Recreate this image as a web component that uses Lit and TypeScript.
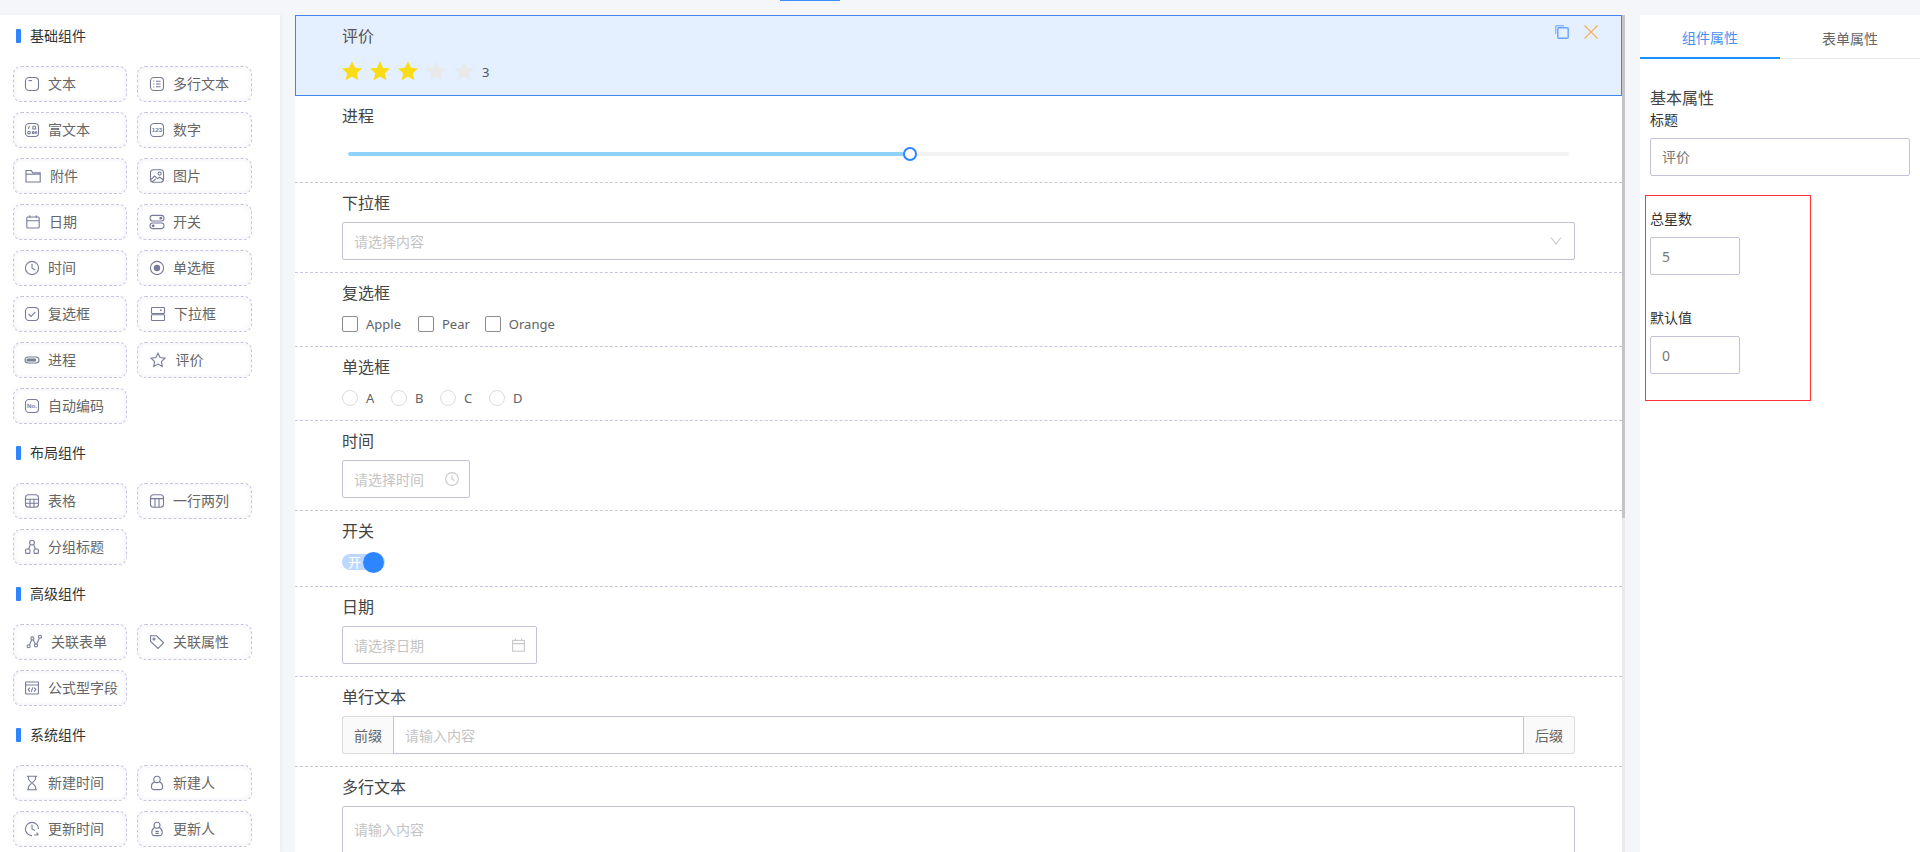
import { LitElement, html, css, svg } from "lit";
import { customElement } from "lit/decorators.js";

const ICONS: Record<string, unknown> = {
  text: svg`<rect x="1.5" y="1.5" width="13" height="13" rx="3.5"/><path d="M4.5 4.6h3.6"/>`,
  multi: svg`<rect x="1.5" y="1.5" width="13" height="13" rx="3.5"/><path d="M7 5.2h4.5M7 8h4.5M7 10.8h4.5M4.7 4.6v1M4.7 7.5v1M4.7 10.4v1"/>`,
  rich: svg`<rect x="1.5" y="1.5" width="13" height="13" rx="3.5"/><path d="M5.4 3.8 4.4 7M8.8 7V5.4a1.4 1.4 0 0 1 2.8 0V7z"/><circle cx="5" cy="10.6" r="1.3"/><circle cx="9.2" cy="10.6" r="1"/><circle cx="12" cy="10.6" r=".7"/>`,
  number: svg`<rect x="1.5" y="1.5" width="13" height="13" rx="3.5"/><text x="8" y="10.4" text-anchor="middle" class="it">123</text>`,
  folder: svg`<path d="M1 2.5h5.2l1.6 2.4h7.4v9.1H1z"/><path d="M1 6.2h14.2"/>`,
  image: svg`<rect x="1.5" y="1.8" width="13" height="12.4" rx="3"/><circle cx="10.6" cy="5.6" r="1.6"/><path d="M1.8 11.6 5.6 8l3 2.6 2-1.4 3.8 2.6M3 14l3.8-3.2"/>`,
  date: svg`<rect x="1.8" y="3" width="12.4" height="11" rx="1"/><path d="M1.8 6.8h12.4M4.8 1.2V4M11.2 1.2V4"/>`,
  switch: svg`<rect x="1" y="1.4" width="14" height="5.6" rx="2.8"/><rect x="1" y="9" width="14" height="5.6" rx="2.8"/><circle cx="11.8" cy="4.2" r="1.4" class="f"/><circle cx="4.2" cy="11.8" r="1.4" class="f"/>`,
  time: svg`<circle cx="8" cy="8" r="6.6"/><path d="M8 3.8V8l3 2"/>`,
  radio: svg`<circle cx="8" cy="8" r="6.6"/><circle cx="8" cy="8" r="3.2" class="f"/>`,
  check: svg`<rect x="1.5" y="1.5" width="13" height="13" rx="3.5"/><path d="m4.6 8 2.4 2.5 4.4-4.6"/>`,
  select: svg`<rect x="1.5" y="1.5" width="13" height="6" rx=".8"/><rect x="1.5" y="8.7" width="13" height="5.8" rx=".8"/><path d="M10 4.2h1.6" stroke-width="1.4"/>`,
  progress: svg`<rect x="1" y="5" width="14" height="6" rx="3"/><rect x="2.6" y="6.4" width="9.4" height="3.2" rx="1.2" class="f"/>`,
  star: svg`<path d="m8 1.2 2.1 4.4 4.8.6-3.5 3.4.9 4.8L8 12.1l-4.3 2.3.9-4.8L1.1 6.2l4.8-.6z"/>`,
  code: svg`<rect x="1.5" y="1.5" width="13" height="13" rx="3.5"/><text x="8" y="10.2" text-anchor="middle" class="it b">No.</text>`,
  table: svg`<rect x="1.5" y="1.8" width="13" height="12.4" rx="3"/><path d="M1.5 6.2h13M1.5 10.2h13M6 6.2v8M10 6.2v8"/>`,
  cols: svg`<rect x="1.5" y="1.8" width="13" height="12.4" rx="3"/><path d="M1.5 5.6h13M6 5.6v8.6M10 5.6v8.6"/>`,
  group: svg`<circle cx="8" cy="3.6" r="2.4"/><rect x="1.6" y="10" width="4.4" height="4.4" rx="1"/><rect x="10" y="10" width="4.4" height="4.4" rx="1"/><path d="M6.4 5.6 4.6 10M9.6 5.6l1.8 4.4"/>`,
  link: svg`<circle cx="2.6" cy="12.2" r="1.5"/><circle cx="6.4" cy="4.4" r="1.5"/><circle cx="10" cy="11.4" r="1.5"/><circle cx="14" cy="2.8" r="1.5"/><path d="M3.4 10.9 5.7 5.8M7.1 5.8l2.2 4.3M10.7 10l2.6-5.8"/>`,
  tag: svg`<path d="M1.6 1.8h6l7 7-5.6 5.6-7.4-7z"/><circle cx="5" cy="5" r="1"/>`,
  formula: svg`<rect x="1.6" y="2" width="12.8" height="12" rx=".6"/><path d="M1.6 5h12.8M5.8 7.6 4.2 9.6l1.6 2M10.2 7.6l1.6 2-1.6 2M8.7 7.4l-1.4 4.4"/>`,
  hourglass: svg`<path d="M2.8 1.2h10.4M2.8 14.8h10.4M4.4 1.2v2.4c0 2.4 3 3 3 4.4s-3 2-3 4.4v2.4M11.6 1.2v2.4c0 2.4-3 3-3 4.4s3 2 3 4.4v2.4"/>`,
  user: svg`<circle cx="8" cy="4.4" r="3.2"/><path d="M5.6 6.8C3.4 7.8 2.4 9.6 2.4 11.4c0 2 1.4 3.2 3.2 3.2h4.8c1.8 0 3.2-1.2 3.2-3.2 0-1.8-1-3.6-3.2-4.6"/>`,
  clock2: svg`<path d="M14.6 8A6.6 6.6 0 1 0 8 14.6"/><path d="M8 3.8V8l3 1.4M10.2 14h4M12.6 11.6l1.8 2.4"/>`,
  user2: svg`<circle cx="8" cy="4.2" r="3"/><path d="M5.6 6.6C3.6 7.6 2.8 9.4 2.8 11.2c0 2 1.2 3.4 3 3.4h4.4c1.8 0 3-1.4 3-3.4 0-1.8-.8-3.6-2.8-4.6M6.4 10.4h3.4M6.4 12.4h3.4"/>`,
};

type Item = [string, string, number?];
const SECTIONS: { title: string; items: Item[] }[] = [
  {
    title: "基础组件",
    items: [
      ["文本", "text"], ["多行文本", "multi"],
      ["富文本", "rich"], ["数字", "number"],
      ["附件", "folder", 16], ["图片", "image"],
      ["日期", "date", 15], ["开关", "switch"],
      ["时间", "time"], ["单选框", "radio"],
      ["复选框", "check"], ["下拉框", "select", 15],
      ["进程", "progress"], ["评价", "star", 16.5],
      ["自动编码", "code"],
    ],
  },
  {
    title: "布局组件",
    items: [["表格", "table"], ["一行两列", "cols"], ["分组标题", "group"]],
  },
  {
    title: "高级组件",
    items: [["关联表单", "link", 17], ["关联属性", "tag"], ["公式型字段", "formula"]],
  },
  {
    title: "系统组件",
    items: [["新建时间", "hourglass"], ["新建人", "user"], ["更新时间", "clock2"], ["更新人", "user2"]],
  },
];

const STAR = "M10 0.2l3 6.5 7 .8-5.2 4.7 1.5 7L10 15.6l-6.3 3.6 1.5-7L0 7.5l7-.8z";

@customElement("app-root")
export class AppRoot extends LitElement {
  static styles = css`
    :host {
      display: block;
      height: 852px;
      overflow: hidden;
      background: #f5f6fa;
      font-family: "Noto Sans", "Noto Sans CJK SC", sans-serif;
      font-size: 14px;
      color: #333;
    }
    * { box-sizing: border-box; }
    .top { height: 15px; padding-left: 780px; }
    .indicator { width: 60px; height: 1px; background: #3a8cff; }
    .main { display: flex; height: 837px; gap: 15px; }

    .left {
      flex: none;
      width: 280px;
      background: #fff;
      box-shadow: 1px 0 4px rgba(120, 120, 160, 0.08);
      overflow: hidden;
    }
    .sec-head {
      display: flex;
      align-items: center;
      height: 42px;
      padding-left: 16px;
      gap: 9px;
      line-height: 20px;
      color: #333;
    }
    .sec-head i { width: 5px; height: 14px; border-radius: 1px; background: #2d85ff; }
    .cards {
      display: grid;
      grid-template-columns: 114px 115px;
      gap: 10px;
      padding-left: 13px;
      margin: 9px 0 8px;
    }
    .card {
      display: flex;
      align-items: center;
      height: 36px;
      padding-left: 11px;
      gap: 9px;
      border: 1px dashed #c8c5dc;
      border-radius: 8px;
      background: #fff;
      box-shadow: inset 0 0 5px #eeeef7;
      color: #666;
      white-space: nowrap;
    }
    .card:nth-child(even) { padding-left: 12px; }
    .card span { padding-bottom: 2px; }
    .ico { flex: none; display: flex; justify-content: center; }
    .ico svg {
      flex: none;
      width: 16px;
      height: 16px;
      fill: none;
      stroke: #777b99;
      stroke-width: 1.1;
    }
    .ico svg .f { fill: #777b99; stroke: none; }
    .ico svg .it {
      font-size: 6.2px;
      font-family: "Liberation Sans", sans-serif;
      fill: #777b99;
      stroke: none;
      font-weight: 700;
    }

    .center { flex: none; width: 1330px; display: flex; height: 100%; }
    .canvas { flex: none; width: 1327px; background: #fff; overflow: hidden; }
    .scroll { flex: none; width: 3px; background: #e9e9e9; }
    .thumb { height: 503px; background: #c4c4c4; }

    .row {
      padding: 8px 47px 12px 47px;
      border-bottom: 1px dashed #c8c5dc;
    }
    .row > label, .lab {
      display: block;
      font-size: 16px;
      line-height: 24px;
      color: #444;
    }
    .sel {
      position: relative;
      padding: 8px 46px 14px 46px;
      background: #e4f0ff;
      border: 1px solid #4285f0;
    }
    .sel .lab { color: #555; }
    .tools svg { position: absolute; top: 9px; width: 14px; height: 14px; fill: none; stroke-width: 1.4; }
    .tools .copy { right: 52px; stroke: #66a3ff; }
    .tools .del { right: 23px; stroke: #f5b05a; stroke-width: 1.2; }
    .rate { display: flex; align-items: center; margin-top: 13px; height: 20px; }
    .rate svg { width: 20px; height: 20px; margin-right: 8px; fill: #fadb14; }
    .rate svg.off { fill: #e9e9e9; }
    .rate span { margin: 2px 0 0; color: #555; font-size: 13px; }

    .slider { margin: 24px 6px 14px; height: 4px; border-radius: 2px; background: #f3f3f3; position: relative; }
    .slider .fill { width: 562px; height: 4px; border-radius: 2px 0 0 2px; background: #8fd3fa; }
    .slider .knob {
      position: absolute;
      left: 555px;
      top: -5px;
      width: 14px;
      height: 14px;
      border-radius: 50%;
      background: #fff;
      border: 2px solid #2d85ff;
    }

    .input {
      display: flex;
      align-items: center;
      height: 38px;
      margin-top: 7px;
      padding: 0 11px;
      border: 1px solid #c4c2d6;
      border-radius: 2px;
      background: #fff;
      color: #c4c4c4;
    }
    .input span { flex: 1; white-space: nowrap; }
    .input svg { flex: none; fill: none; stroke: #c8c8c8; stroke-width: 1.1; }
    .chev { width: 12px; height: 10px; margin-right: 1px; }
    .w-time { width: 128px; padding-right: 10px; }
    .w-date { width: 195px; }

    .checks { display: flex; align-items: center; height: 16px; margin: 11px 0 2px; color: #606266; font-size: 13px; }
    .box { flex: none; width: 16px; height: 16px; border: 1px solid #8c8c8c; border-radius: 2px; background: #fff; margin-right: 8px; }
    .checks .t { margin-right: 17px; }
    .checks .t.p { margin-right: 15px; }
    .circ { flex: none; width: 16px; height: 16px; border: 1px solid #dcdcdc; border-radius: 50%; background: #fff; margin-right: 8px; }
    .checks .r { width: 25px; }

    .switch {
      position: relative;
      display: flex;
      align-items: center;
      width: 43px;
      height: 16px;
      margin: 11px 0 4px;
      padding-left: 6px;
      border-radius: 8px;
      background: #bdd8ff;
      color: #fff;
      font-size: 13px;
      line-height: 16px;
    }
    .switch i {
      position: absolute;
      right: 1px;
      top: -2.5px;
      width: 21px;
      height: 21px;
      border-radius: 50%;
      background: #2d85ff;
    }

    .group {
      display: flex;
      height: 38px;
      margin-top: 7px;
    }
    .addon {
      flex: none;
      display: flex;
      align-items: center;
      justify-content: center;
      background: #fafafa;
      border: 1px solid #dcdcdc;
      color: #666;
    }
    .addon.a { width: 51px; border-radius: 3px 0 0 3px; border-right: 0; }
    .addon.b { width: 52px; border-radius: 0 3px 3px 0; border-left: 1px solid #c4c2d6; }
    .group .input { flex: 1; margin: 0; border-radius: 0; border-right: 0; }
    .area { display: flex; align-items: flex-start; height: 100px; padding-top: 13px; line-height: 20px; }
    .last { border-bottom: 0; }

    .right { flex: none; width: 280px; background: #fff; }
    .tabs { display: flex; height: 44px; }
    .tab {
      flex: 1;
      display: flex;
      align-items: center;
      justify-content: center;
      padding-top: 2px;
      border-bottom: 1px solid #e8e8e8;
      color: #666;
    }
    .tab.on { color: #4a90f0; border-bottom: 2px solid #1890ff; }
    .props { padding: 27px 10px 0; }
    .h { font-size: 16px; line-height: 24px; margin-bottom: -1px; color: #444; }
    .pl { line-height: 22px; color: #333; }
    .pi {
      display: flex;
      align-items: center;
      height: 38px;
      margin-top: 7px;
      padding: 0 11px;
      border: 1px solid #c4c2d6;
      border-radius: 2px;
      color: #777;
    }
    .pi.cn { padding-bottom: 2px; }
    .pi.s { width: 90px; }
    .redbox {
      width: 166px;
      height: 206px;
      margin: 19px 0 0 -5px;
      padding: 12px 0 0 4px;
      border: 1px solid #f33;
    }
    .redbox .second { margin-top: 32px; }
  `;

  private card(it: Item) {
    const [name, icon, w] = it;
    return html`<div class="card">
      <div class="ico" style="width:${w ?? 14}px"><svg viewBox="0 0 16 16">${ICONS[icon]}</svg></div>
      <span>${name}</span>
    </div>`;
  }

  render() {
    const clock = svg`<svg width="14" height="14" viewBox="0 0 14 14"><circle cx="7" cy="7" r="6.4"/><path d="M7 3.4V7l2.4 1.4"/></svg>`;
    const cal = svg`<svg width="13" height="14" viewBox="0 0 13 14"><rect x=".6" y="2.4" width="11.8" height="10.8"/><path d="M.6 5.6h11.8M3.4.6v2.4M9.6.6v2.4"/></svg>`;
    return html`
      <div class="top"><div class="indicator"></div></div>
      <div class="main">
        <aside class="left">
          ${SECTIONS.map(
            (s) => html`
              <div class="sec-head"><i></i><span>${s.title}</span></div>
              <div class="cards">${s.items.map((it) => this.card(it))}</div>
            `
          )}
        </aside>

        <section class="center">
          <div class="canvas">
            <div class="sel">
              <div class="lab">评价</div>
              <div class="tools">
                <svg class="copy" viewBox="0 0 14 14"><rect x="2.8" y="2.8" width="10.4" height="10.4" rx="1"/><path d="M.7 9V1.6a.9.9 0 0 1 .9-.9H9" stroke-opacity=".7"/></svg>
                <svg class="del" viewBox="0 0 14 14"><path d="M.5.5l13 13M13.5.5l-13 13"/></svg>
              </div>
              <div class="rate">
                ${[1, 2, 3, 4, 5].map(
                  (n) => html`<svg viewBox="0 0 20 20" class=${n > 3 ? "off" : ""}><path d=${STAR}></path></svg>`
                )}
                <span>3</span>
              </div>
            </div>

            <div class="row">
              <label>进程</label>
              <div class="slider"><div class="fill"></div><div class="knob"></div></div>
            </div>

            <div class="row">
              <label>下拉框</label>
              <div class="input">
                <span>请选择内容</span>
                <svg class="chev" viewBox="0 0 12 10"><path d="M1 1.5 6 8l5-6.5"/></svg>
              </div>
            </div>

            <div class="row">
              <label>复选框</label>
              <div class="checks">
                <div class="box"></div><span class="t">Apple</span>
                <div class="box"></div><span class="t p">Pear</span>
                <div class="box"></div><span>Orange</span>
              </div>
            </div>

            <div class="row">
              <label>单选框</label>
              <div class="checks">
                <div class="circ"></div><span class="r">A</span>
                <div class="circ"></div><span class="r">B</span>
                <div class="circ"></div><span class="r">C</span>
                <div class="circ"></div><span>D</span>
              </div>
            </div>

            <div class="row">
              <label>时间</label>
              <div class="input w-time"><span>请选择时间</span>${clock}</div>
            </div>

            <div class="row">
              <label>开关</label>
              <div class="switch">开<i></i></div>
            </div>

            <div class="row">
              <label>日期</label>
              <div class="input w-date"><span>请选择日期</span>${cal}</div>
            </div>

            <div class="row">
              <label>单行文本</label>
              <div class="group">
                <div class="addon a">前缀</div>
                <div class="input"><span>请输入内容</span></div>
                <div class="addon b">后缀</div>
              </div>
            </div>

            <div class="row last">
              <label>多行文本</label>
              <div class="input area"><span>请输入内容</span></div>
            </div>
          </div>
          <div class="scroll"><div class="thumb"></div></div>
        </section>

        <aside class="right">
          <div class="tabs">
            <div class="tab on">组件属性</div>
            <div class="tab">表单属性</div>
          </div>
          <div class="props">
            <div class="h">基本属性</div>
            <div class="pl">标题</div>
            <div class="pi cn">评价</div>
            <div class="redbox">
              <div class="pl">总星数</div>
              <div class="pi s">5</div>
              <div class="pl second">默认值</div>
              <div class="pi s">0</div>
            </div>
          </div>
        </aside>
      </div>
    `;
  }
}
